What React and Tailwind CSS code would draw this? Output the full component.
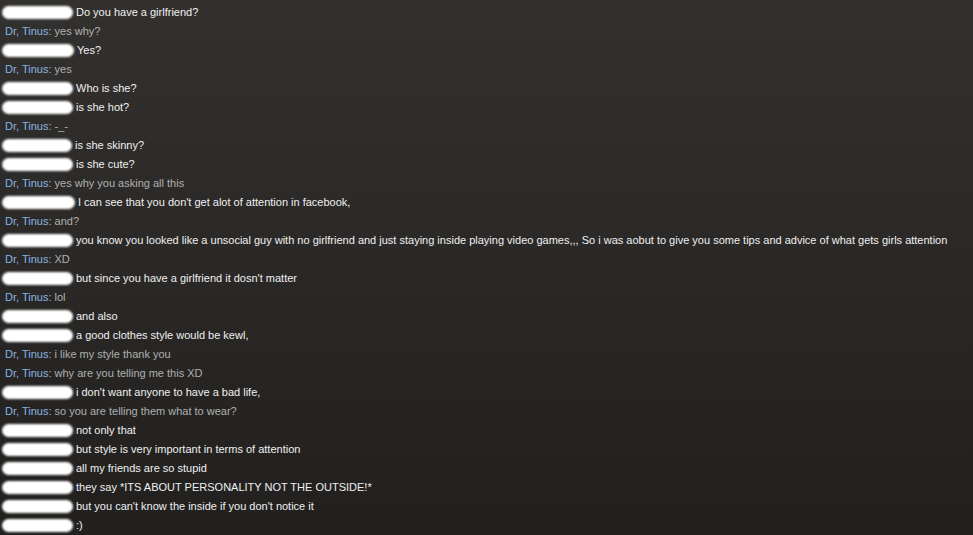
// Chat log with redacted names
const lines = [
  ['u', 'Do you have a girlfriend?', 71],
  ['d', 'yes why?'],
  ['u', 'Yes?', 72],
  ['d', 'yes'],
  ['u', 'Who is she?', 71],
  ['u', 'is she hot?', 71],
  ['d', '-_-'],
  ['u', 'is she skinny?', 70],
  ['u', 'is she cute?', 71],
  ['d', 'yes why you asking all this'],
  ['u', "I can see that you don't get alot of attention in facebook,", 73],
  ['d', 'and?'],
  ['u', 'you know you looked like a unsocial guy with no girlfriend and just staying inside playing video games,,, So i was aobut to give you some tips and advice of what gets girls attention', 71],
  ['d', 'XD'],
  ['u', "but since you have a girlfriend it dosn't matter", 71],
  ['d', 'lol'],
  ['u', 'and also', 71],
  ['u', 'a good clothes style would be kewl,', 71],
  ['d', 'i like my style thank you'],
  ['d', 'why are you telling me this XD'],
  ['u', "i don't want anyone to have a bad life,", 71],
  ['d', 'so you are telling them what to wear?'],
  ['u', 'not only that', 71],
  ['u', 'but style is very important in terms of attention', 71],
  ['u', 'all my friends are so stupid', 71],
  ['u', 'they say *ITS ABOUT PERSONALITY NOT THE OUTSIDE!*', 71],
  ['u', "but you can't know the inside if you don't notice it", 71],
  ['u', ':)', 71],
];

function Blob({ width }) {
  return (
    <span
      className="inline-block h-[13px] rounded-full bg-white blur-[1.2px] mr-[3px] ml-[2px] shrink-0"
      style={{ width }}
    ></span>
  );
}

export default function App() {
  return (
    <div
      className="w-[973px] h-[535px] overflow-hidden bg-gradient-to-b from-[#33312f] to-[#21201e] pt-[3px] text-[11px] leading-[19px]"
      style={{ fontFamily: '"Liberation Sans", Arial, sans-serif' }}
    >
      {lines.map(([who, text, w], i) => (
        <div key={i} className="flex items-center h-[19px] whitespace-nowrap">
          {who === 'u' ? (
            <>
              <Blob width={w} />
              <span className="text-[#f0f0f0]">{text}</span>
            </>
          ) : (
            <span className="pl-[5px]">
              <span className="text-[#88b4e0]">Dr, Tinus</span>
              <span className="text-[#b0b0b0]">: {text}</span>
            </span>
          )}
        </div>
      ))}
    </div>
  );
}
